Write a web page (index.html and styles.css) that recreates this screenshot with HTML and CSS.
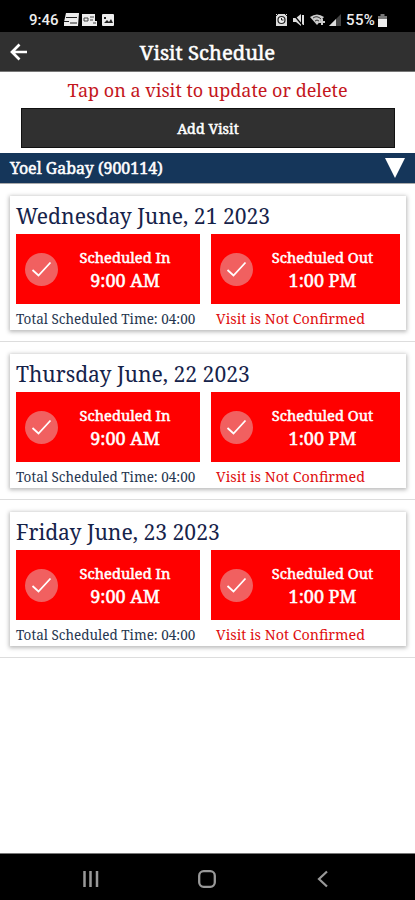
FILE: index.html
```html
<!DOCTYPE html>
<html lang="en">
<head>
<meta charset="utf-8">
<title>Visit Schedule</title>
<link rel="stylesheet" href="styles.css">
</head>
<body>
<svg width="0" height="0" class="defs"><symbol id="check" viewBox="0 0 33 33"><circle cx="16.5" cy="16.5" r="16.5" fill="#f16060"/><path d="M7.500 17l6 5.500L25.500 9.500" fill="none" stroke="#fff" stroke-width="1.800"/></symbol></svg>
<div class="status">
  <span class="clock">9:46</span>
  <svg class="left-icons" width="51" height="14" viewBox="0 0 51 14">
    <path d="M2 0h13l-1 13H0V9z" fill="#eee"/><path d="M2 4.500h11M0 8.500h5M6 10h7" stroke="#222" stroke-width="1.200"/>
    <path d="M18 1h13v7h2v5H18z" fill="#eee"/><path d="M20 5h4v3h-4zM26 4h4M26 7h3M29 10h3" fill="none" stroke="#444"/>
    <rect x="38" y="1" width="12" height="12" rx="1" fill="#eee"/><path d="M40 10l3-3 2 2 2-3 2 4zM40 4h2v2h-2z" fill="#222"/>
  </svg>
  <svg class="right-icons" width="66" height="14" viewBox="0 0 66 14">
    <path d="M0 1h11v12H0z" fill="#ddd"/><circle cx="5.500" cy="7" r="3.500" fill="#eee" stroke="#222" stroke-width="1.200"/><path d="M5.500 5v2h2M0 3l2-2M11 3L9 1" fill="none" stroke="#222"/>
    <path d="M17 5h3l5-4v12l-5-4h-3zM26 2h2v10h-2z" fill="#ddd"/><path d="M17 1l10 12" stroke="#000" stroke-width="1.200"/>
    <path d="M34 4q7-5 14 0l-7 8z" fill="#ccc"/><path d="M37 5q4-3 8 1M39 8q2-2 4 0" fill="none" stroke="#333"/><path d="M43 9h6M46 6v6" stroke="#ccc" stroke-width="2"/>
    <path d="M53 13L65 1v12z" fill="#444"/><path d="M53 13l7-7v7z" fill="#ddd"/>
  </svg>
  <span class="pct">55%</span>
  <svg class="battery" width="9" height="13" viewBox="0 0 9 13"><path d="M2.500 0h4v2H9v4H0V2h2.500z" fill="#777"/><path d="M0 5h9v8H0z" fill="#eee"/></svg>
</div>
<header class="header">
  <svg class="back" width="18" height="18" viewBox="0 0 18 18"><path d="M17 9H2M9.500 1.500L2 9l7.500 7.500" fill="none" stroke="#fff" stroke-width="2.700"/></svg>
  <h1><span class="title">Visit Schedule</span></h1>
</header>
<main class="main">
  <p class="hint"><span>Tap on a visit to update or delete</span></p>
  <button class="add"><span>Add Visit</span></button>
  <div class="client"><span class="client-name">Yoel Gabay (900114)</span><svg width="20" height="20" viewBox="0 0 20 20"><path d="M0 0h20L10 20z" fill="#fff"/></svg></div>
  <section class="visit"><article class="card">
    <h2>Wednesday June, 21 2023</h2>
    <div class="times">
      <div class="time"><svg width="33" height="33"><use href="#check"/></svg><div class="copy"><span class="label">Scheduled In</span><span class="hour">9:00 AM</span></div></div>
      <div class="time"><svg width="33" height="33"><use href="#check"/></svg><div class="copy"><span class="label">Scheduled Out</span><span class="hour">1:00 PM</span></div></div>
    </div>
    <div class="foot"><span class="total">Total Scheduled Time: 04:00</span><span class="state">Visit is Not Confirmed</span></div>
  </article></section>
  <section class="visit"><article class="card">
    <h2>Thursday June, 22 2023</h2>
    <div class="times">
      <div class="time"><svg width="33" height="33"><use href="#check"/></svg><div class="copy"><span class="label">Scheduled In</span><span class="hour">9:00 AM</span></div></div>
      <div class="time"><svg width="33" height="33"><use href="#check"/></svg><div class="copy"><span class="label">Scheduled Out</span><span class="hour">1:00 PM</span></div></div>
    </div>
    <div class="foot"><span class="total">Total Scheduled Time: 04:00</span><span class="state">Visit is Not Confirmed</span></div>
  </article></section>
  <section class="visit"><article class="card">
    <h2>Friday June, 23 2023</h2>
    <div class="times">
      <div class="time"><svg width="33" height="33"><use href="#check"/></svg><div class="copy"><span class="label">Scheduled In</span><span class="hour">9:00 AM</span></div></div>
      <div class="time"><svg width="33" height="33"><use href="#check"/></svg><div class="copy"><span class="label">Scheduled Out</span><span class="hour">1:00 PM</span></div></div>
    </div>
    <div class="foot"><span class="total">Total Scheduled Time: 04:00</span><span class="state">Visit is Not Confirmed</span></div>
  </article></section>
</main>
<nav class="nav">
  <svg width="18" height="18" viewBox="0 0 18 18"><path d="M2.500 1v16M8.500 1v16M15 1v16" stroke="#999" stroke-width="2.500"/></svg>
  <svg width="18" height="18" viewBox="0 0 18 18"><rect x="1.200" y="1.200" width="15.600" height="15.600" rx="4.500" fill="none" stroke="#999" stroke-width="2.300"/></svg>
  <svg width="18" height="18" viewBox="0 0 18 18"><path d="M13 1.500L5 9l8 7.500" fill="none" stroke="#999" stroke-width="2.200"/></svg>
</nav>
</body>
</html>
```

FILE: styles.css
```css
* { box-sizing: border-box; }
body {
  margin: 0;
  width: 415px;
  height: 900px;
  display: flex;
  flex-direction: column;
  overflow: hidden;
  background: #fff;
  font-family: "Noto Serif", "DejaVu Serif Condensed", "DejaVu Serif", serif;
  font-stretch: condensed;
  white-space: nowrap;
}
svg { display: block; flex: none; }
.defs { position: absolute; }
h1, h2, p { margin: 0; font-weight: 400; }
.status {
  height: 32px;
  flex: none;
  display: flex;
  align-items: center;
  padding: 8px 0 0 29px;
  background: #000;
  color: #eee;
  font: 500 15px/20px Roboto, sans-serif;
}
.clock { width: 35px; }
.right-icons { margin-left: 161px; }
.pct { width: 32px; margin-left: 4px; letter-spacing: 0.4px; }
.header {
  height: 40px;
  flex: none;
  display: flex;
  align-items: center;
  padding-left: 10px;
  background: #303030;
  border-bottom: 1px solid #777;
  color: #fff;
}
.header h1 {
  flex: 1;
  margin-right: 28px;
  text-align: center;
  font-size: 20.3px;
  line-height: 38px;
}
.title, .add, .client-name, .copy { -webkit-text-stroke: 0.5px currentColor; }
.main { flex: 1; display: flex; flex-direction: column; }
.hint {
  height: 36px;
  text-align: center;
  line-height: 36px;
  font-size: 18px;
  color: #c4161c;
}
.add {
  height: 40px;
  margin: 0 20px 0 21px;
  padding: 0;
  border: 1px solid #111;
  background: #303030;
  color: #fff;
  font-family: inherit;
  font-stretch: inherit;
  font-size: 14.3px;
}
.client {
  display: flex;
  justify-content: space-between;
  align-items: center;
  height: 31px;
  margin-top: 5px;
  padding: 0 10px;
  background: #15365a;
  border-bottom: 1px solid #aaa;
  color: #fff;
  font-size: 16px;
}
.visit {
  height: 158px;
  padding: 12px 9px 0 10px;
  border-bottom: 1px solid #ddd;
}
.card {
  height: 134px;
  padding: 0 6px;
  background: #fff;
  box-shadow: 0 1px 4px 1px #bbb;
}
.card h2 {
  height: 38px;
  line-height: 40px;
  font-size: 21.1px;
  color: #16234a;
}
.times { display: grid; grid-template-columns: 184px 189px; gap: 11px; }
.time {
  height: 70px;
  display: flex;
  align-items: center;
  padding-left: 9px;
  background: #f00;
  color: #fff;
}
.copy {
  flex: 1;
  display: flex;
  flex-direction: column;
  align-items: center;
  padding: 0 8px 1px 0;
}
.label { font-size: 14.7px; line-height: 23px; }
.hour { font-size: 18px; line-height: 22px; }
.foot {
  display: grid;
  grid-template-columns: 200px 1fr;
  font-size: 13.5px;
  line-height: 30px;
  color: #263650;
}
.state { color: #e01010; font-size: 14.3px; }
.nav {
  height: 47px;
  flex: none;
  display: flex;
  align-items: center;
  gap: 98px;
  padding: 3px 0 0 82px;
  border-top: 1px solid #777;
  background: #000;
}
```
